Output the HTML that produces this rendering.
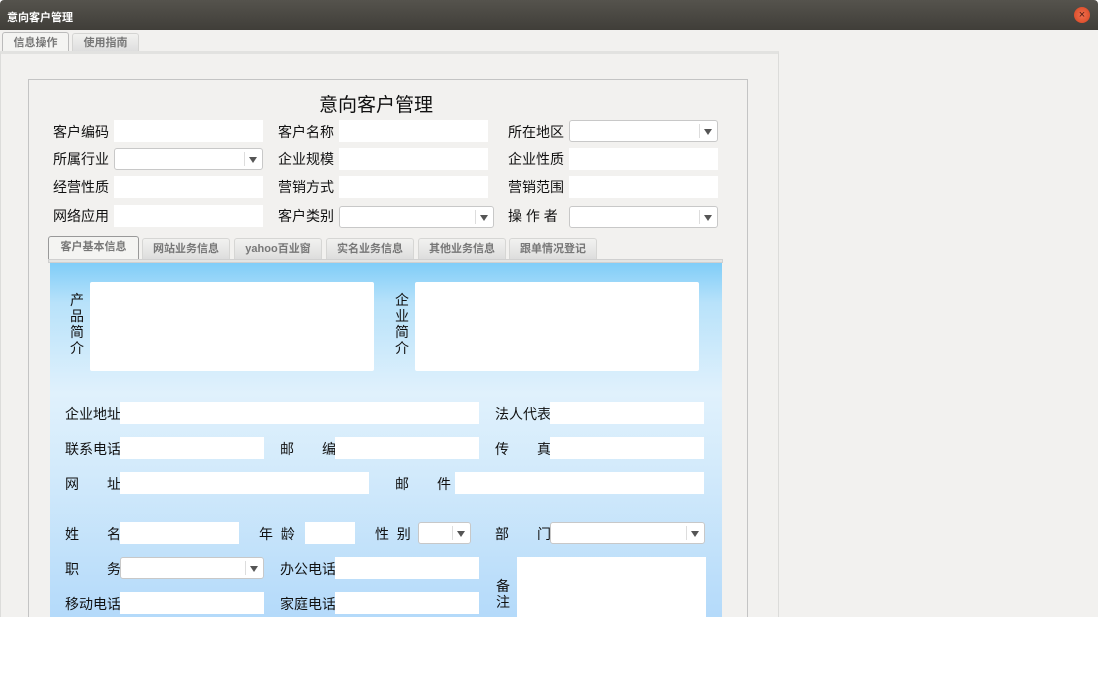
<!DOCTYPE html>
<html><head><meta charset="utf-8"><style>
*{margin:0;padding:0;box-sizing:border-box}
body{width:1098px;height:697px;background:#fff;position:relative;overflow:hidden;font-family:"Liberation Sans","Noto Sans CJK SC",sans-serif;font-size:14px;color:#111}
.a{position:absolute}
.in{position:absolute;background:#fff;height:22px}
.sel{position:absolute;background:#fff;height:22px;border:1px solid #c8c8c8;border-radius:3px}
.sel:after{content:"";position:absolute;right:5px;top:8px;border-left:4px solid transparent;border-right:4px solid transparent;border-top:6px solid #555}
.sel:before{content:"";position:absolute;right:17px;top:3px;height:14px;border-left:1px solid #ddd}
.l{position:absolute;font-size:14px;line-height:16px;white-space:pre}
.j{position:absolute;font-size:14px;line-height:16px;width:56px;display:flex;justify-content:space-between}
.tab{position:absolute;top:238px;height:21px;background:linear-gradient(#f2f2f0,#ddd);border:1px solid #d6d6d4;border-bottom:none;border-radius:3px 3px 0 0;font-size:11px;font-weight:bold;color:#777;text-align:center;line-height:20px}
</style></head><body>
<div class="a" style="left:0;top:0;width:1098px;height:30px;background:linear-gradient(#55534d,#403e39);border-radius:4px 4px 0 0"></div>
<div class="a" style="left:7px;top:9px;color:#fff;font-size:11px;font-weight:bold">意向客户管理</div>
<div class="a" style="left:1074px;top:7px;width:16px;height:16px;border-radius:50%;background:radial-gradient(#f07050,#d8441f);color:#4a1a10;font-size:11px;line-height:16px;text-align:center">×</div>
<div class="a" style="left:0;top:30px;width:1098px;height:587px;background:#f2f1ef"></div>
<div class="a" style="left:2px;top:32px;width:67px;height:21px;background:#f4f4f2;border:1px solid #bbb;border-bottom:none;border-radius:3px 3px 0 0;font-size:11px;color:#777;font-weight:bold;text-align:center;line-height:20px">信息操作</div>
<div class="a" style="left:72px;top:33px;width:67px;height:19px;background:linear-gradient(#f2f2f0,#ddd);border:1px solid #d4d4d2;border-bottom:none;border-radius:3px 3px 0 0;font-size:11px;color:#777;font-weight:bold;text-align:center;line-height:19px">使用指南</div>
<div class="a" style="left:0;top:51px;width:779px;height:566px;border:1px solid #dcdcda;border-top:3px solid #e2e2e0;border-bottom:none"></div>
<div class="a" style="left:28px;top:79px;width:720px;height:540px;border:1px solid #c4c4c4;border-bottom:none"></div>
<div class="a" style="left:0;width:752px;top:90px;text-align:center;font-size:19px;color:#111">意向客户管理</div>
<div class="l" style="left:53px;top:124px">客户编码</div><div class="in" style="left:114px;top:120px;width:149px"></div>
<div class="l" style="left:278px;top:124px">客户名称</div><div class="in" style="left:339px;top:120px;width:149px"></div>
<div class="l" style="left:508px;top:124px">所在地区</div><div class="sel" style="left:569px;top:120px;width:149px"></div>
<div class="l" style="left:53px;top:151px">所属行业</div><div class="sel" style="left:114px;top:148px;width:149px"></div>
<div class="l" style="left:278px;top:151px">企业规模</div><div class="in" style="left:339px;top:148px;width:149px"></div>
<div class="l" style="left:508px;top:151px">企业性质</div><div class="in" style="left:569px;top:148px;width:149px"></div>
<div class="l" style="left:53px;top:179px">经营性质</div><div class="in" style="left:114px;top:176px;width:149px"></div>
<div class="l" style="left:278px;top:179px">营销方式</div><div class="in" style="left:339px;top:176px;width:149px"></div>
<div class="l" style="left:508px;top:179px">营销范围</div><div class="in" style="left:569px;top:176px;width:149px"></div>
<div class="l" style="left:53px;top:208px">网络应用</div><div class="in" style="left:114px;top:205px;width:149px"></div>
<div class="l" style="left:278px;top:208px">客户类别</div><div class="sel" style="left:339px;top:206px;width:155px"></div>
<div class="l" style="left:508px;top:208px">操 作 者</div><div class="sel" style="left:569px;top:206px;width:149px"></div>
<div class="tab" style="left:48px;width:91px;top:236px;height:24px;background:#f4f4f2;border-color:#999;color:#777">客户基本信息</div>
<div class="tab" style="left:142px;width:88px">网站业务信息</div>
<div class="tab" style="left:234px;width:88px">yahoo百业窗</div>
<div class="tab" style="left:326px;width:88px">实名业务信息</div>
<div class="tab" style="left:418px;width:88px">其他业务信息</div>
<div class="tab" style="left:509px;width:88px">跟单情况登记</div>
<div class="a" style="left:48px;top:259px;width:675px;height:4px;background:#e4e4e2;border:1px solid #d0d0d0"></div>
<div class="a" style="left:50px;top:263px;width:672px;height:354px;background:linear-gradient(#80cdf8 0px,#b8e2fa 40px,#e0f1fc 130px,#d4ebfb 200px,#b4dafa 354px)"></div>
<div class="l" style="left:70px;top:292px;width:14px;line-height:16px;white-space:normal">产品简介</div>
<div class="in" style="left:90px;top:282px;width:284px;height:89px;border-radius:2px"></div>
<div class="l" style="left:395px;top:292px;width:14px;line-height:16px;white-space:normal">企业简介</div>
<div class="in" style="left:415px;top:282px;width:284px;height:89px;border-radius:2px"></div>
<div class="l" style="left:65px;top:406px">企业地址</div><div class="in" style="left:120px;top:402px;width:359px"></div>
<div class="l" style="left:495px;top:406px">法人代表</div><div class="in" style="left:550px;top:402px;width:154px"></div>
<div class="l" style="left:65px;top:441px">联系电话</div><div class="in" style="left:120px;top:437px;width:144px"></div>
<div class="j" style="left:280px;top:441px"><span>邮</span><span>编</span></div><div class="in" style="left:335px;top:437px;width:144px"></div>
<div class="j" style="left:495px;top:441px"><span>传</span><span>真</span></div><div class="in" style="left:550px;top:437px;width:154px"></div>
<div class="j" style="left:65px;top:476px"><span>网</span><span>址</span></div><div class="in" style="left:120px;top:472px;width:249px"></div>
<div class="j" style="left:395px;top:476px;width:56px"><span>邮</span><span>件</span></div><div class="in" style="left:455px;top:472px;width:249px"></div>
<div class="j" style="left:65px;top:526px"><span>姓</span><span>名</span></div><div class="in" style="left:120px;top:522px;width:119px"></div>
<div class="l" style="left:259px;top:526px">年  龄</div><div class="in" style="left:305px;top:522px;width:50px"></div>
<div class="l" style="left:375px;top:526px">性  别</div><div class="sel" style="left:418px;top:522px;width:53px"></div>
<div class="j" style="left:495px;top:526px"><span>部</span><span>门</span></div><div class="sel" style="left:550px;top:522px;width:155px"></div>
<div class="j" style="left:65px;top:561px"><span>职</span><span>务</span></div><div class="sel" style="left:120px;top:557px;width:144px"></div>
<div class="l" style="left:280px;top:561px">办公电话</div><div class="in" style="left:335px;top:557px;width:144px"></div>
<div class="l" style="left:496px;top:578px;width:14px;white-space:normal">备注</div><div class="in" style="left:517px;top:557px;width:189px;height:62px"></div>
<div class="l" style="left:65px;top:596px">移动电话</div><div class="in" style="left:120px;top:592px;width:144px"></div>
<div class="l" style="left:280px;top:596px">家庭电话</div><div class="in" style="left:335px;top:592px;width:144px"></div>
<div class="a" style="left:0;top:617px;width:1098px;height:80px;background:#fff"></div>
</body></html>
